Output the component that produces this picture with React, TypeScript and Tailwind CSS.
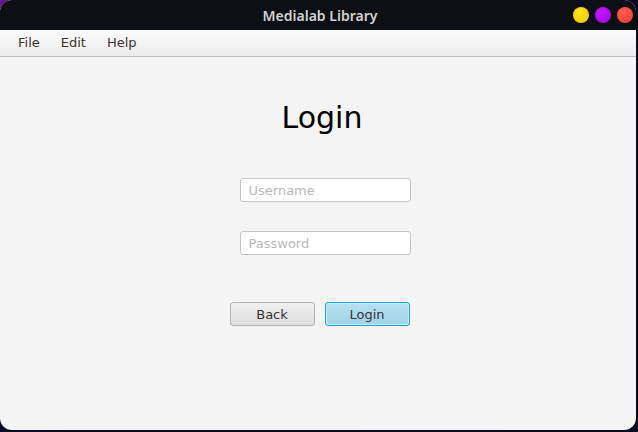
import React from "react";

const font = { fontFamily: '"DejaVu Sans", "Noto Sans", sans-serif' };

const App = () => {
  return (
    <div
      className="w-[638px] h-[432px] overflow-hidden bg-[linear-gradient(135deg,#6a1a9a_0%,#3a0f6a_2%,#0c0b22_4%,#0a0a1e_100%)] pr-[2px] pb-[2px]"
      style={font}
    >
      <div className="w-[636px] h-[430px] rounded-[12px] overflow-hidden flex flex-col bg-[#f4f4f4]">
        {/* Title bar */}
        <div className="h-[30px] shrink-0 bg-[#0e0f14] flex items-center relative">
          <div className="flex-1 text-center text-[14px] font-semibold text-[#d2d2d2] pl-[4px]" style={{ fontFamily: '"Noto Sans", "DejaVu Sans", sans-serif' }}>
            Medialab Library
          </div>
          <div className="absolute right-[3px] top-[7px] flex gap-[6px]">
            <span className="w-[16px] h-[16px] rounded-full bg-[radial-gradient(circle_at_40%_35%,#ffe21a,#eec400)]" />
            <span className="w-[16px] h-[16px] rounded-full bg-[radial-gradient(circle_at_40%_35%,#c21aff,#a200e0)]" />
            <span className="w-[16px] h-[16px] rounded-full bg-[radial-gradient(circle_at_40%_35%,#ff5a4a,#ee3a36)]" />
          </div>
        </div>

        {/* Menu bar */}
        <div className="h-[27px] shrink-0 flex items-center gap-[1px] px-[8px] bg-[linear-gradient(#fbfbfb,#ebebeb)] border-b border-[#bcbcbc] text-[13px] text-[#3a3530]">
          <span className="px-[10px]">File</span>
          <span className="px-[10px]">Edit</span>
          <span className="px-[10px]">Help</span>
        </div>

        {/* Content */}
        <div className="flex-1 flex justify-center pl-[4px]">
          <div className="w-[181px] flex flex-col">
            <h1 className="mt-[43px] pl-[4px] text-[30px] leading-[36px] text-black text-center">Login</h1>
            <input
              placeholder="Username"
              className="mt-[42px] ml-[10px] w-[171px] h-[24px] bg-white border border-[#c4c4c4] rounded-[3px] px-[8px] text-[13px] text-[#333] placeholder:text-[#b9b9b9] outline-none"
              style={font}
            />
            <input
              type="password"
              placeholder="Password"
              className="mt-[29px] ml-[10px] w-[171px] h-[24px] bg-white border border-[#c4c4c4] rounded-[3px] px-[8px] text-[13px] text-[#333] placeholder:text-[#b9b9b9] outline-none"
              style={font}
            />
            <div className="mt-[47px] flex gap-[10px]">
              <button
                className="w-[85px] h-[24px] rounded-[3px] border border-[#b4b4b4] bg-[linear-gradient(#efefef,#dedede)] text-[13px] leading-[24px] text-[#333]"
                style={font}
              >
                Back
              </button>
              <button
                className="w-[85px] h-[24px] rounded-[3px] border border-[#1ea2d8] bg-[linear-gradient(#b6e0f1,#a2d2e8)] text-[13px] leading-[24px] text-[#333] shadow-[inset_0_0_0_1px_#c8ecfa]"
                style={font}
              >
                Login
              </button>
            </div>
          </div>
        </div>
      </div>
    </div>
  );
};

export default App;
